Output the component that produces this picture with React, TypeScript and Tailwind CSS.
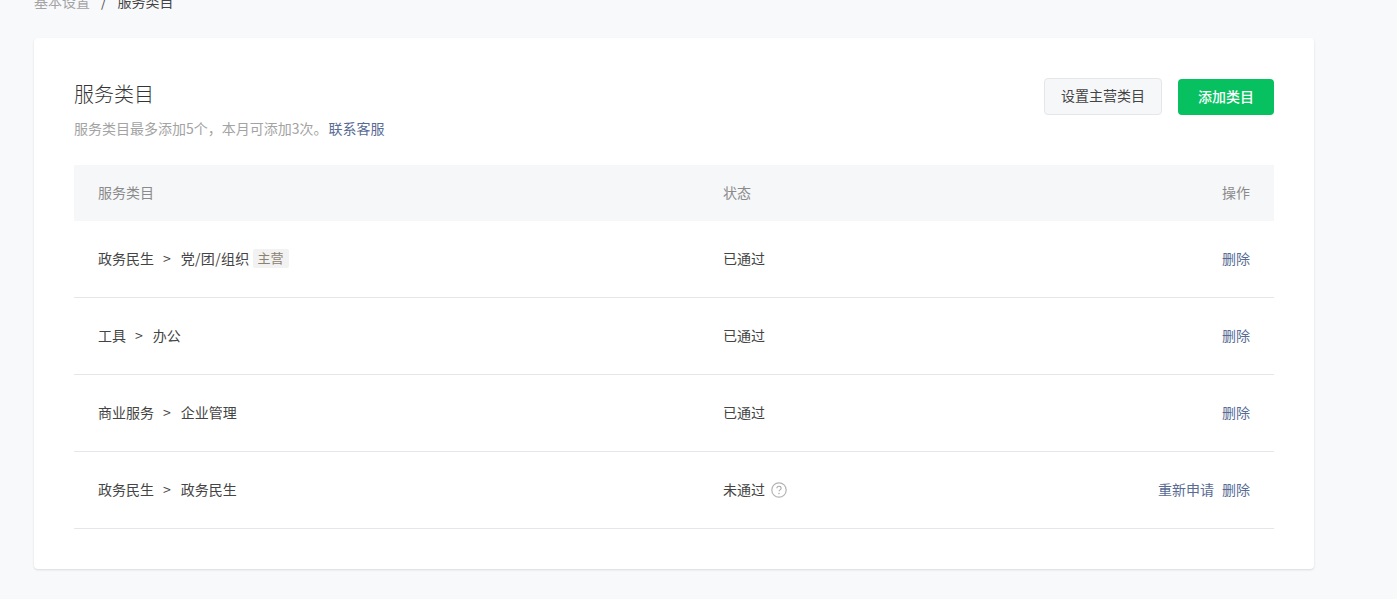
const font = { fontFamily: '"Noto Sans CJK SC", "Liberation Sans", sans-serif' };

function Sep() {
  return <span className="ml-[9px] mr-[10px]">&gt;</span>;
}

const rows = [
  { a: "政务民生", b: "党/团/组织", main: true, status: "已通过" },
  { a: "工具", b: "办公", status: "已通过" },
  { a: "商业服务", b: "企业管理", status: "已通过" },
  { a: "政务民生", b: "政务民生", status: "未通过", failed: true },
];

function Help() {
  return (
    <svg width="16" height="16" viewBox="0 0 16 16" className="ml-[6px] mt-[2px]" fill="none">
      <circle cx="8" cy="8" r="7.2" stroke="#b4b4b4" strokeWidth="1.2" />
      <path d="M5.9 6.3c0-1.2.9-2 2.1-2s2.1.8 2.1 1.9c0 .8-.4 1.2-1.1 1.7-.6.4-.9.7-.9 1.4" stroke="#a8a8a8" strokeWidth="1.1" />
      <circle cx="8" cy="11.5" r=".75" fill="#a8a8a8" />
    </svg>
  );
}

export default function App() {
  return (
    <div className="h-[599px] overflow-hidden bg-[#f8f9fb] text-[14px] text-[#444444] leading-[20px]" style={font}>
      <div className="pl-[34px] -mt-[9px] h-[47px] flex items-start">
        <span className="text-[#a3a3a3]">基本设置</span>
        <span className="ml-[11px] mr-[11px] text-[#555]">/</span>
        <span>服务类目</span>
      </div>
      <div className="ml-[34px] w-[1280px] h-[531px] rounded-[4px] bg-white shadow-[0_1px_2px_rgba(150,150,150,0.3)] px-[40px] pt-[40px]">
        <div className="flex justify-between h-[87px]">
          <div>
            <h1 className="text-[20px] leading-[32px] font-light text-[#353535]">服务类目</h1>
            <p className="mt-[8px] text-[#a3a3a3]">
              服务类目最多添加5个，本月可添加3次。<span className="ml-[1px] text-[#576b95]">联系客服</span>
            </p>
          </div>
          <div className="flex items-start gap-[16px]">
            <button className="w-[118px] h-[37px] pb-[4px] rounded-[4px] border border-[#e4e6e9] bg-[#f6f7f9] text-[#444444]">设置主营类目</button>
            <button className="w-[96px] h-[36px] mt-[1px] pb-[2px] rounded-[4px] bg-[#07c160] text-white font-medium">添加类目</button>
          </div>
        </div>
        <div className="h-[56px] bg-[#f6f7f9] flex items-center px-[24px] pb-[2px] text-[#8a8a8a]">
          <div className="w-[625px]">服务类目</div>
          <div className="flex-1">状态</div>
          <div>操作</div>
        </div>
        {rows.map((r, i) => (
          <div key={i} className="h-[77px] pb-[2px] border-b border-[#e4e6e9] flex items-center px-[24px]">
            <div className="w-[625px] flex items-center">
              <span>{r.a}</span>
              <Sep />
              <span className={r.main ? "tracking-[0.3px]" : ""}>{r.b}</span>
              {r.main && (
                <span className="ml-[3px] h-[19px] w-[36px] rounded-[2px] bg-[#f2f2f2] text-[#8c8271] text-[13px] leading-[18px] text-center">主营</span>
              )}
            </div>
            <div className="flex-1 flex items-center">
              {r.status}
              {r.failed && <Help />}
            </div>
            <div className="text-[#576b95] flex gap-[8px]">
              {r.failed && <span>重新申请</span>}
              <span>删除</span>
            </div>
          </div>
        ))}
      </div>
    </div>
  );
}
